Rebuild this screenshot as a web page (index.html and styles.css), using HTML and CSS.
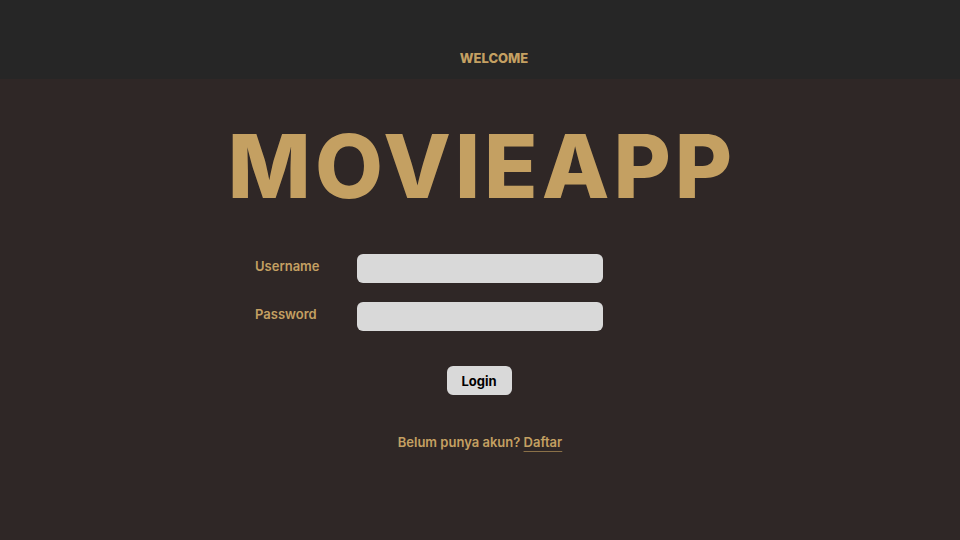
FILE: index.html
```html
<!DOCTYPE html>
<html>
<head>
<meta charset="utf-8">
<link rel="stylesheet" href="styles.css">
</head>
<body>
<header class="topbar"><span class="welcome">WELCOME</span></header>
<main class="main">
  <h1 class="title">MOVIEAPP</h1>
  <form class="form">
    <div class="row"><label class="label">Username</label><input class="field" type="text"></div>
    <div class="row"><label class="label">Password</label><input class="field" type="password"></div>
    <div class="actions"><button class="btn" type="button">Login</button></div>
  </form>
  <p class="signup">Belum punya akun? <a class="link" href="#">Daftar</a></p>
</main>
</body>
</html>
```
FILE: styles.css
```css
html, body { margin: 0; padding: 0; }
body {
  width: 960px; height: 540px; overflow: hidden;
  background: #2f2726;
  font-family: Inter, "Noto Sans", sans-serif;
  color: #c4a062;
}
.topbar {
  height: 79px; background: #262626;
  display: flex; justify-content: center; align-items: flex-end;
  box-sizing: border-box; padding-bottom: 13px; padding-left: 28px;
}
.welcome { font-weight: 800; font-size: 13px; letter-spacing: 0px; }
.main { display: flex; flex-direction: column; align-items: center; }
.title {
  margin: 35px 0 0; font-size: 88px; font-weight: 800; line-height: 104px;
  letter-spacing: 4px; padding-left: 4px;
}
.form { width: 450px; margin-top: 36px; display: flex; flex-direction: column; gap: 19px; }
.row { display: flex; align-items: center; }
.label { width: 102px; font-weight: 600; font-size: 13px; padding-bottom: 5px; }
.field {
  width: 246px; height: 29px; box-sizing: border-box; border: none; border-radius: 6px;
  background: #d9d9d9; outline: none;
}
.actions { display: flex; justify-content: center; margin-top: 16px; }
.btn {
  width: 65px; height: 29px; border: none; border-radius: 6px; background: #d9d9d9;
  font-family: Inter, sans-serif; font-weight: 700; font-size: 13px; color: #000;
  margin-left: -2px;
}
.signup { margin: 39px 0 0; font-weight: 600; font-size: 13px; }
.link { color: #c4a062; text-decoration: underline; text-underline-offset: 4px; text-decoration-color: #8a7048; }
```
